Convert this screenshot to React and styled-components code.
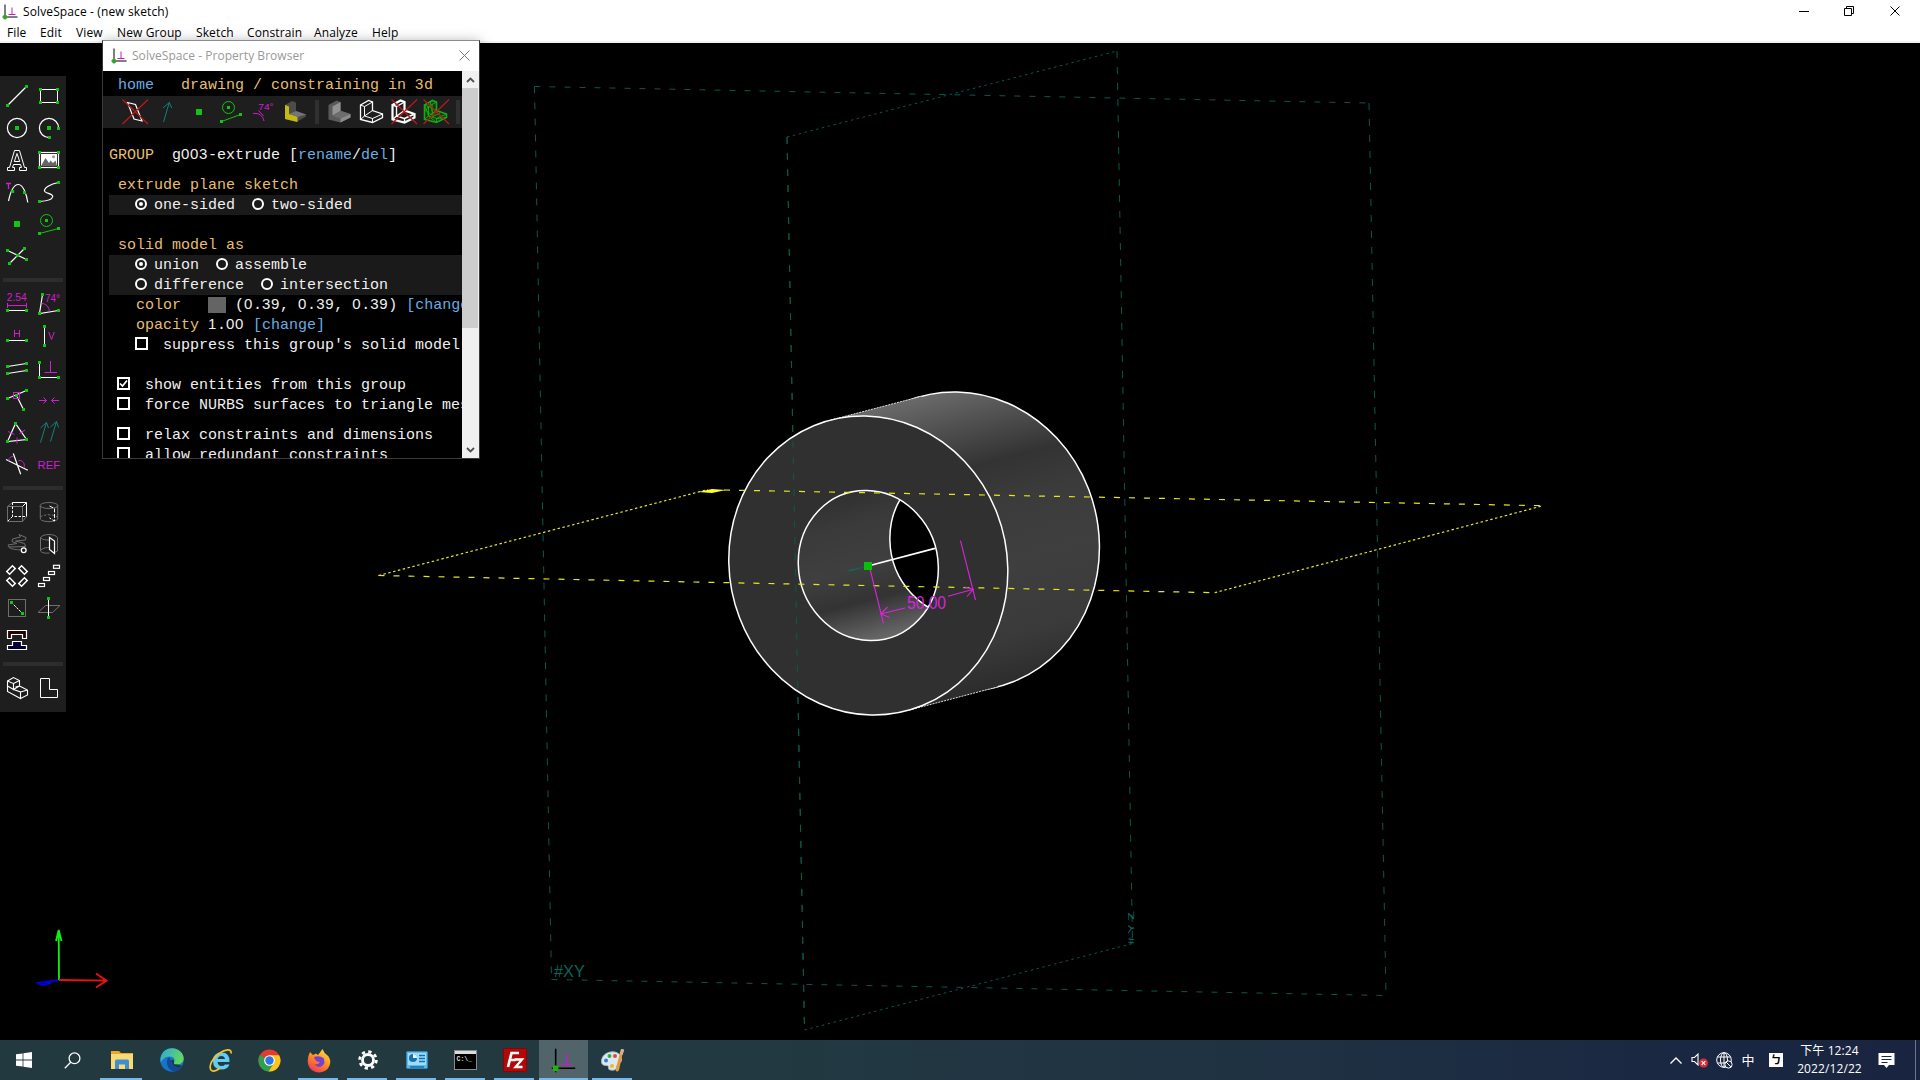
import React from "react";
import styled, { createGlobalStyle, css } from "styled-components";

const GREEN = "#12c412";
const MAGENTA = "#cf1fcf";
const TEAL = "#16807a";
const GRAY = "#6f6f6f";

const GlobalStyle = createGlobalStyle`
  * { box-sizing: border-box; }
  html, body { margin: 0; background: #000; overflow: hidden; }
`;

const Screen = styled.div`
  width: 1920px;
  height: 1080px;
  display: flex;
  flex-direction: column;
  position: relative;
  overflow: hidden;
  font-family: "Open Sans", "Noto Sans", "Noto Sans CJK TC", sans-serif;
  font-size: 12px;
  color: #000;
`;

/* ---------- main window chrome ---------- */
const TitleBar = styled.header`
  height: 23px;
  flex: none;
  display: flex;
  align-items: center;
  background: #fff;
  padding: 0 2px;
`;
const TitleText = styled.span`
  margin-left: 5px;
  flex: 1;
  line-height: 23px;
  letter-spacing: ${(p) => p.$spacing || "0"};
  color: ${(p) => p.$color || "#000"};
  white-space: pre;
`;
const Controls = styled.div`
  display: flex;
  height: 100%;
`;
const ControlButton = styled.button`
  width: ${(p) => p.$width || 46}px;
  height: 21px;
  padding: 0;
  border: 0;
  background: transparent;
  display: flex;
  align-items: center;
  justify-content: center;
`;
const MenuBar = styled.nav`
  height: 20px;
  flex: none;
  display: flex;
  background: #fff;
  border-bottom: 2px solid #f2f2f2;
  padding-left: 7px;
`;
const MenuItem = styled.span`
  width: ${(p) => p.$width}px;
  line-height: 20px;
  letter-spacing: 0.12px;
  white-space: nowrap;
`;

const Canvas = styled.main`
  height: 997px;
  flex: none;
  position: relative;
  background: #000;
`;
const SceneSvg = styled.svg`
  display: block;
`;

/* ---------- floating tool palette ---------- */
const Palette = styled.aside`
  position: absolute;
  left: 0;
  top: 33px;
  width: 66px;
  height: 636px;
  padding: 4px 1px;
  background: #1e1e1e;
`;
const PaletteGrid = styled.div`
  display: grid;
  grid-template-columns: 32px 32px;
  grid-auto-rows: 32px;
`;
const PaletteRule = styled.div`
  height: 4px;
  margin: 6px 2px;
  background: #2d2d2d;
`;
const Icon = styled.svg`
  display: block;
  width: 32px;
  height: 32px;
  flex: none;
  fill: none;
  stroke: #fff;
  stroke-width: 1;
`;

/* ---------- property browser ---------- */
const Browser = styled.section`
  position: absolute;
  left: 102px;
  top: 40px;
  width: 378px;
  height: 419px;
  border: 1px solid #3a3a3a;
  border-top-color: #8b8b8b;
  box-shadow: 0 2px 12px rgba(0, 0, 0, 0.35);
  background: #000;
  display: flex;
  flex-direction: column;
`;
const BrowserTitle = styled.div`
  height: 30px;
  flex: none;
  display: flex;
  align-items: center;
  background: #fff;
  padding: 0 0 1px 8px;
`;
const BrowserBody = styled.div`
  flex: 1;
  min-height: 0;
  display: flex;
`;
const Page = styled.div`
  flex: 1;
  min-width: 0;
  overflow: hidden;
  padding-top: 4px;
  font-family: "Liberation Mono", "DejaVu Sans Mono", monospace;
  font-size: 15px;
  color: #f0f0f0;
`;
const Row = styled.div`
  height: 20px;
  line-height: 22px;
  display: flex;
  white-space: pre;
  margin-left: 6px;
  padding-left: ${(p) => (p.$col || 0) * 9}px;
  margin-top: ${(p) => p.$gap || 0}px;
  ${(p) => p.$shaded && css`background: #1a1a1a;`}
`;
const tones = { amber: "#e6bd73", link: "#68ade0", plain: "#f0f0f0" };
const Run = styled.span`
  color: ${(p) => tones[p.$tone || "plain"]};
  flex: none;
`;
const Digit = styled.span`
  font-family: "Liberation Sans", sans-serif;
  letter-spacing: 0.66px;
  line-height: 0;
`;
const Strip = styled.div`
  display: flex;
  align-items: center;
  height: 32px;
  margin-top: 1px;
  padding-left: 16px;
  background: #1e1e1e;
`;
const StripRule = styled.div`
  width: 4px;
  height: 24px;
  flex: none;
  margin: 0 5px 0 4px;
  background: #303030;
`;
const Radio = styled.span`
  width: 12px;
  height: 12px;
  flex: none;
  margin: 3px 7px 0 ${(p) => (p.$first ? -1 : 17)}px;
  border: 2px solid #fff;
  border-radius: 50%;
  display: flex;
  align-items: center;
  justify-content: center;
  &::after {
    content: "";
    width: 4px;
    height: 4px;
    border-radius: 50%;
    background: ${(p) => (p.$on ? "#fff" : "transparent")};
  }
`;
const Check = styled.span`
  width: 13px;
  height: 13px;
  flex: none;
  margin: 2px 15px 0 -1px;
  border: 2px solid #fff;
  display: flex;
`;
const Swatch = styled.span`
  width: 18px;
  height: 16px;
  margin-top: 2px;
  flex: none;
  background: #646464;
`;
const ScrollTrack = styled.div`
  width: 17px;
  flex: none;
  background: #f0f0f0;
  display: flex;
  flex-direction: column;
`;
const ScrollArrow = styled.div`
  height: 17px;
  display: flex;
  align-items: center;
  justify-content: center;
`;
const ScrollThumb = styled.div`
  height: 240px;
  margin-right: 1px;
  background: #cdcdcd;
`;
const Spacer = styled.div`
  flex: 1;
`;

/* ---------- taskbar ---------- */
const Taskbar = styled.footer`
  height: 40px;
  flex: none;
  display: flex;
  background: linear-gradient(90deg, #22393f 0%, #223941 38%, #1f3242 65%, #1a2742 88%, #192540 100%);
`;
const Task = styled.div`
  width: ${(p) => p.$width || 49}px;
  height: 40px;
  display: flex;
  align-items: center;
  justify-content: center;
  background: ${(p) => (p.$active ? "#50646a" : "transparent")};
  position: relative;
  &::after {
    content: "";
    position: absolute;
    bottom: 0;
    left: ${(p) => (p.$active ? 0 : 4)}px;
    right: ${(p) => (p.$active ? 0 : 5)}px;
    height: 2px;
    background: ${(p) => (p.$open ? "#76b9ed" : "transparent")};
  }
`;
const Tray = styled.div`
  display: flex;
  align-items: center;
  color: #fff;
  width: 256px;
`;
const TrayCell = styled.div`
  width: ${(p) => p.$width}px;
  display: flex;
  justify-content: center;
  align-items: center;
`;
const Ime = styled.span`
  font-family: "Noto Sans CJK TC", sans-serif;
  font-size: 13px;
  line-height: 18px;
`;
const Bopomofo = styled.span`
  width: 14px;
  height: 14px;
  background: #fff;
  color: #000;
  font-family: "Noto Sans CJK TC", sans-serif;
  font-size: 11px;
  font-weight: 700;
  line-height: 13px;
  text-align: center;
`;
const Clock = styled.div`
  font-family: "Open Sans", "Noto Sans CJK TC", sans-serif;
  font-size: 12px;
  line-height: 18px;
  letter-spacing: 0.1px;
  text-align: center;
  white-space: nowrap;
`;
const Peek = styled.div`
  width: 5px;
  height: 40px;
  border-left: 1px solid #6b7488;
`;

/* ---------- drawing helpers ---------- */
const Dots = ({ at, r = 1.5 }) =>
  at.map(([x, y], i) => (
    <rect key={i} x={x - r} y={y - r} width={2 * r} height={2 * r} fill={GREEN} stroke="none" />
  ));

const Label = ({ x, y, size = 10, children, w }) => (
  <text
    x={x} y={y} fontSize={size} fill={MAGENTA} stroke="none"
    fontFamily="'Liberation Sans', sans-serif" textLength={w} lengthAdjust="spacingAndGlyphs"
  >
    {children}
  </text>
);

const Logo = ({ size = 16 }) => (
  <svg width={size} height={size} viewBox="0 0 16 16" fill="none">
    <path d="M3 0.5V15.5M0.5 13H15.5" stroke="#000" strokeWidth="1" />
    <path d="M10 3.5V10.5M6.5 10.5H13.5" stroke="#c020c0" strokeWidth="1" />
    <rect x="1.2" y="11.2" width="3.6" height="3.6" fill="#22b014" />
  </svg>
);

const sketchTools = [
  <><path d="M6.5 25.5L25.5 6.5" strokeWidth="1.3" /><Dots at={[[6.5, 25.5], [25.5, 6.5]]} /></>,
  <><path d="M7.5 9.5H24.5V22.5H7.5Z" /><Dots at={[[7.5, 9.5], [24.5, 9.5], [24.5, 22.5], [7.5, 22.5]]} /></>,
  <><circle cx="16" cy="16" r="9.6" strokeWidth="1.2" /><Dots at={[[16, 16]]} r={2} /></>,
  <><path d="M25.6 16A9.6 9.6 0 1 0 16 25.6" strokeWidth="1.2" /><Dots at={[[16, 16]]} r={2} /><Dots at={[[25.5, 16.5], [16.5, 25.5]]} /></>,
  <path d="M6.5 26.5V23.5H8.5L13.5 6.5H18.5L23.5 23.5H25.5V26.5H18.5V23.5H20.5L19.5 20.5H12.5L11.5 23.5H13.5V26.5ZM16 9.5L13.3 17.5H18.7Z" />,
  <>
    <rect x="6.5" y="8.5" width="19" height="15" strokeWidth="1.2" />
    <rect x="8" y="10" width="16" height="12" fill="#fff" stroke="none" />
    <path d="M8 22L12.5 14L16 19L17.5 16.5L20 19L22.5 16.5L24 22Z" fill="#666" stroke="none" />
    <circle cx="20.5" cy="12.7" r="1.5" fill="#999" stroke="none" />
    <Dots at={[[6.5, 8.5], [25.5, 8.5], [25.5, 23.5], [6.5, 23.5]]} />
  </>,
  <>
    <path d="M5 7.5H10M7.5 7.5V13" stroke={MAGENTA} strokeWidth="1.3" />
    <path d="M7.5 25C9 18 12 8.5 17.3 8.5C22 8.5 25.5 18 26.8 26.5" strokeWidth="1.2" />
    <Dots at={[[11.7, 15.5], [23.5, 16.5]]} />
  </>,
  <><path d="M25.5 6.5C17 8 11 12 11.5 15C12 17.5 20 17.5 19.7 20.5C19.4 23.5 14 25 6.5 25.5" strokeWidth="1.2" /><Dots at={[[25.5, 6.5], [6.5, 25.5]]} /></>,
  <Dots at={[[16, 16]]} r={3} />,
  <><g stroke={GREEN}><circle cx="13.5" cy="12.5" r="6" /><path d="M6.5 25.5L25.5 20.5" /></g><Dots at={[[13.5, 12.5], [6.5, 25.5], [25.5, 20.5]]} /></>,
  <><path d="M6.5 10.5L25.5 19.5M23.5 8.5L8.5 23.5" strokeWidth="1.2" /><Dots at={[[6.5, 10.5], [23.5, 8.5], [25.5, 19.5], [8.5, 23.5], [16.7, 15.3]]} /></>,
];

const constraintTools = [
  <><Label x={5.8} y={13} size={10} w={20}>2.54</Label><path d="M6.5 17.5H25.5M6.5 15V20M25.5 15V20" stroke={MAGENTA} /><path d="M6.5 22.5H25.5" /><Dots at={[[6.5, 22.5], [25.5, 22.5]]} /></>,
  <><path d="M9.5 6.5L6.5 25.5L25.5 22.5" strokeWidth="1.2" /><path d="M8.5 15.5C13 15.5 16.3 19 16.3 23.5" stroke={MAGENTA} /><Label x={12} y={13.6} size={10} w={15}>74°</Label><Dots at={[[9.5, 6.5], [6.5, 25.5], [25.5, 22.5]]} /></>,
  <><path d="M13.5 10V17M18.5 10V17M13.5 13.5H18.5" stroke={MAGENTA} /><path d="M6.5 20.5H25.5" /><Dots at={[[6.5, 20.5], [25.5, 20.5]]} /></>,
  <><path d="M11.5 6.5V25.5" /><path d="M15.7 12L18.5 19.5L21.3 12" stroke={MAGENTA} /><Dots at={[[11.5, 6.5], [11.5, 25.5]]} /></>,
  <><path d="M6.5 14.5L25.5 11.5M6.5 21.5L25.5 18.5" strokeWidth="1.2" /><Dots at={[[6.5, 14.5], [25.5, 11.5], [6.5, 21.5], [25.5, 18.5]]} /></>,
  <><path d="M6.5 10.5V25.5H25.5" /><path d="M17.5 9V20.5M11.5 20.5H24" stroke={MAGENTA} /><Dots at={[[6.5, 10.5], [6.5, 25.5], [25.5, 25.5]]} /></>,
  <><path d="M6.5 14.5L25.5 6.5M15.5 11.5L22.5 25.5" strokeWidth="1.2" /><rect x="12.5" y="8.5" width="6" height="6" stroke={MAGENTA} /><Dots at={[[6.5, 14.5], [25.5, 6.5], [22.5, 25.5], [15.5, 11.5]]} /></>,
  <path d="M6 16.5H13.5M10.5 13.5L13.5 16.5L10.5 19.5M26 16.5H18.5M21.5 13.5L18.5 16.5L21.5 19.5" stroke={MAGENTA} />,
  <><path d="M14.5 7.5L6.5 25.5L25.5 23.5Z" strokeWidth="1.2" /><path d="M7 15.5L13.5 18.5M24 14L18.5 17.5M16 21.5V27.5" stroke={MAGENTA} /><Dots at={[[14.5, 7.5], [6.5, 25.5], [25.5, 23.5]]} /></>,
  <path d="M7.5 26.5L13.5 6.5M7.5 12L13.5 6.5L15.5 12M17.5 25.5L23.5 5.5M17.5 11L23.5 5.5L25.5 11.5" stroke={TEAL} />,
  <><path d="M5 11.5L26.8 22.3M12.3 5.5L19.7 26.3" strokeWidth="1.2" /><path d="M7.5 12.5C8 9.5 10.5 8 13 8.5M17.5 12.5C22 12 24.5 16 22.8 20" stroke={MAGENTA} /></>,
  <Label x={4.6} y={20.7} size={11} w={22.5}>REF</Label>,
];

const groupTools = [
  <><path d="M6.5 10.5H21.5V25.5H6.5ZM6.5 10.5L11.5 6.5M21.5 25.5L25.5 20.5" stroke={GRAY} /><path d="M11.5 6.5H25.5V20.5M21.5 10.5L25.5 6.5" /><path d="M11.5 6.5V20.5H25.5M11.5 20.5L6.5 25.5" strokeDasharray="2.5 1.5" /></>,
  <><ellipse cx="16" cy="9.5" rx="8.8" ry="3" stroke={GRAY} /><path d="M7.3 9.5V23C9 26.5 23 26.5 24.7 23V9.5" stroke={GRAY} /><path d="M7.3 21C11 18 20 18 24.7 21" stroke={GRAY} strokeDasharray="2.5 1.5" /><path d="M16.5 10L21.5 12.5V25L16.5 22" strokeDasharray="4 1.5" /></>,
  <><path d="M18 6.5L25 9.5L24.5 12L14.5 13L23.5 15.5L24.5 18.5L8 19L7 17L16 15.5L11 13.5L11.5 11L19.5 9ZM8 19C8 21 15 21.5 19.5 22" stroke={GRAY} /><circle cx="22.7" cy="22.3" r="2.4" strokeWidth="1.3" /></>,
  <><path d="M7.5 9.5C10 5.5 22 5.5 24.5 9.5V23L21.5 24.5M7.5 9.5V23C9 25 12 25.5 16.5 25M7.5 9.5C9.5 12 13 12 16.5 12M7.5 22C11 19.5 14 19.5 16.5 19.5" stroke={GRAY} /><path d="M16.5 9.5L21.5 13V25.5L16.5 21.5Z" strokeWidth="1.2" /></>,
  <g strokeWidth="1.5">
    <rect x="6" y="8" width="8" height="4" transform="rotate(-45 10 10)" />
    <rect x="18" y="8" width="8" height="4" transform="rotate(45 22 10)" />
    <rect x="6" y="20" width="8" height="4" transform="rotate(45 10 22)" />
    <rect x="18" y="20" width="8" height="4" transform="rotate(-45 22 22)" />
  </g>,
  <g strokeWidth="1.2">
    <rect x="20.5" y="5.3" width="6" height="3" /><rect x="15.5" y="11.5" width="6" height="3" />
    <rect x="10.5" y="17.5" width="6" height="3" /><rect x="5.5" y="23.5" width="6" height="3" />
  </g>,
  <><rect x="7.5" y="7.5" width="17" height="17" stroke={GRAY} /><path d="M10.5 10.5L21.5 21.5" strokeDasharray="2.5 1" /><Dots at={[[10.5, 10.5], [21.5, 21.5]]} /></>,
  <><path d="M12.5 13.5H27L19.5 20.5H5Z" stroke={GRAY} /><path d="M15.5 6.5V25.5" /><Dots at={[[15.5, 6.5], [15.5, 25.5]]} /></>,
  <>
    <path d="M6.5 6.5H25.5V14.5H21.5V10.5H10.5V14.5H6.5Z" fill="#2a0000" strokeWidth="1.2" />
    <path d="M11.5 17.5H20.5V21.5H25.5V25.5H6.5V21.5H11.5Z" fill="#000036" strokeWidth="1.2" />
  </>,
];

const viewTools = [
  <path d="M6.5 9L12.5 5.5L18.5 8.5V14L12.5 17.5V11.5L6.5 9V19.5L19.5 26.5V20L12.5 17.5M12.5 11.5L18.5 8.5M18.5 14L26.5 18V23L19.5 26.5M19.5 20L26.5 18M6.5 14L12.5 17.5M18.5 14L14.5 15" strokeWidth="1.1" />,
  <path d="M7.5 6.5H16.5V17.5H24.5V25.5H7.5Z" />,
];

const RedX = () => <path d="M3.5 3.5L29 28M29 3.5L3.5 28" stroke="#c01818" strokeWidth="1.2" />;
const SEAT = "M4.5 9L12.5 4.5L16.5 6V14.5L26.5 18V21.5L16.5 26.5L4.5 23.5Z";
const SEAT_EDGES = "M4.5 9L8.5 10.5L16.5 6M8.5 10.5V20L16.5 22.5V26.5M16.5 22.5L26.5 18M8.5 20L16.5 14.5M4.5 23.5L8.5 20";

const visibilityTools = [
  <><path d="M8.5 6.5L16.5 8.5L23 25L15 23Z" strokeWidth="1.2" /><RedX /></>,
  <path d="M12.5 26L18.3 6.5M12 12L18.3 6.5L20.7 12" stroke={TEAL} />,
  <Dots at={[[16, 16]]} r={3} />,
  <><g stroke={GREEN}><circle cx="13.5" cy="11.5" r="6" /><path d="M6.5 25.5L25.5 18.5" /></g><Dots at={[[13.5, 11.5], [6.5, 25.5], [25.5, 18.5]]} /></>,
  <><Label x={11.2} y={14} size={9} w={15.5}>74°</Label><path d="M6 17.5C12 16.5 16 20 17 25M11.5 14.5L16.5 20" stroke={MAGENTA} /></>,
  <g stroke="none">
    <path d="M6 9L13 5L17 6.5V15L27 18.5V20.5L17.5 26L6 23Z" fill="#4c4c4c" />
    <path d="M6 9L10 10.5V18L18.5 20.5V26L6 23Z" fill="#c4ba12" />
    <path d="M10 18L17 15L27 18.5L18.5 21Z" fill="#757575" />
  </g>,
];

const shapeTools = [
  <g stroke="none">
    <path d={SEAT} fill="#5a5a5a" />
    <path d="M8.5 10.5L16.5 6V15L8.5 19.5Z" fill="#939393" />
    <path d="M8.5 20L16.5 15L26.5 18L16.5 22.5Z" fill="#6d6d6d" />
    <path d="M16.5 22.5L26.5 18V21.5L16.5 26.5Z" fill="#8c8c8c" />
  </g>,
  <><path d={SEAT} strokeWidth="1.3" /><path d={SEAT_EDGES} /></>,
  <><path d={SEAT} strokeWidth="2.2" /><path d={SEAT_EDGES} strokeWidth="1.4" /><RedX /></>,
  <><g stroke="#18a818"><path d={SEAT} fill="#0d400d" strokeWidth="1.6" /><path d={SEAT_EDGES} /><path d="M4.5 9L8.5 20M8.5 10.5L16.5 14.5M8.5 20L16.5 26.5M16.5 22.5L26.5 21.5M4.5 16L8.5 10.5M12 8L12.5 18M12 21L20 17M20 20.5L22 24M10 5.5L13 20L6 14" strokeWidth=".9" /></g><RedX /></>,
];

const IconCells = ({ icons }) =>
  icons.map((art, i) => (
    <Icon key={i} viewBox="0 0 32 32">{art}</Icon>
  ));

const T = ({ tone, children }) => (
  <Run $tone={tone}>
    {String(children).split(/([0-9]+)/).map((part, i) =>
      /^[0-9]+$/.test(part) ? <Digit key={i}>{part}</Digit> : part
    )}
  </Run>
);

const CheckBox = ({ on }) => (
  <Check>
    {on && <svg width="9" height="9" viewBox="0 0 9 9"><path d="M1 4.5L3.5 7L8 1.5" fill="none" stroke="#fff" strokeWidth="1.7" /></svg>}
  </Check>
);

/* ---------- 3D view ---------- */
const disc = (cx, cy, k) => `matrix(${139.5 * k} ${2.8 * k} ${2.85 * k} ${149.5 * k} ${cx} ${cy})`;
const FRONT = [868.3, 565.5];
const BACK = [959.9, 541.5];

const Disc = ({ c, k, fill = "none" }) => (
  <circle
    r="1" transform={disc(c[0], c[1], k)} fill={fill}
    stroke="#fff" strokeWidth="1.5" vectorEffect="non-scaling-stroke"
  />
);

const Scene = () => (
  <SceneSvg width="1920" height="997" viewBox="0 43 1920 997" fill="none">
    <defs>
      <linearGradient id="outer" gradientUnits="userSpaceOnUse" x1="830.2" y1="420.2" x2="906.4" y2="710.8">
        <stop offset="0" stopColor="#6a6a6a" />
        <stop offset=".1" stopColor="#555" />
        <stop offset=".27" stopColor="#333" />
        <stop offset=".4" stopColor="#3b3b3b" />
        <stop offset=".6" stopColor="#3f3f3f" />
        <stop offset=".85" stopColor="#3a3a3a" />
        <stop offset="1" stopColor="#2c2c2c" />
      </linearGradient>
      <linearGradient id="bore" gradientUnits="userSpaceOnUse" x1="849.2" y1="492.5" x2="887.4" y2="638.5">
        <stop offset="0" stopColor="#303030" />
        <stop offset=".2" stopColor="#3a3a3a" />
        <stop offset=".5" stopColor="#3f3f3f" />
        <stop offset=".72" stopColor="#333" />
        <stop offset="1" stopColor="#6a6a6a" />
      </linearGradient>
      <clipPath id="boreClip"><circle r="1" transform={disc(FRONT[0], FRONT[1], 0.502)} /></clipPath>
      <clipPath id="wallClip">
        <circle r="1" transform={disc(BACK[0], BACK[1], 1)} />
        <path d="M830.2 420.2L921.8 396.2L998 686.8L906.4 710.8Z" />
      </clipPath>
    </defs>

    <g stroke="#075a4e" strokeWidth="1">
      <path d="M534.5 86.5L1369 103M551.5 979.5L1386 995.5" strokeDasharray="6 9" />
      <path d="M534.5 86.5L551.5 979.5M1369 103L1386 995.5M787 137L804.5 1030M1117 51L1132.5 943.5" strokeDasharray="7 9" />
      <path d="M787 137L1117 51M804.5 1030L1132.5 943.5" strokeDasharray="2.5 3.5" />
    </g>
    <text x="554" y="977" fontSize="16" fill="#0b6459" fontFamily="'Liberation Sans', sans-serif" textLength="31" lengthAdjust="spacingAndGlyphs">#XY</text>
    <text transform="matrix(0 -1 .6 -.15 1133.5 944)" fontSize="14" fill="#0f7468" fontFamily="'Liberation Sans', sans-serif" textLength="33">#YZ</text>

    <rect x="820" y="380" width="290" height="345" fill="url(#outer)" clipPath="url(#wallClip)" />
    <Disc c={BACK} k={1} />
    <path d="M830.2 420.2L921.8 396.2L998 686.8L906.4 710.8Z" fill="url(#outer)" />
    <path d="M830.2 420.2L921.8 396.2M906.4 710.8L998 686.8" stroke="#ddd" strokeWidth="1" strokeDasharray="2 1" />
    <Disc c={FRONT} k={1} fill="#303030" />
    <g clipPath="url(#boreClip)">
      <rect x="790" y="485" width="160" height="165" fill="url(#bore)" />
      <Disc c={BACK} k={0.502} fill="#000" />
    </g>
    <Disc c={FRONT} k={0.502} />
    <path d="M787 137L804.5 1030" stroke="#075a4e" strokeDasharray="7 9" />

    <g stroke="#e6e620" strokeWidth="1.2">
      <path d="M378.500 575.5L1214.7 592.7M724 490L1543 505.7" strokeDasharray="6 9" />
      <path d="M378.500 575.5L708 489.5M1214.7 592.7L1543 505.7" strokeDasharray="2.5 2.5" />
    </g>
    <path d="M698 492L712 489L726 490L712 493Z" fill="#ffff20" />

    <path d="M868 566L935 548.3" stroke="#fff" strokeWidth="1.8" />
    <path d="M848 570L868 566L850 571.5Z" fill="#0a6a64" />
    <g stroke="#d924d9" strokeWidth="1.1">
      <path d="M869.5 567L883.5 623.5M960.5 540.7L975.5 600" />
      <path d="M880.7 614L905 608M887.5 607L880.7 614L889.5 617.5M948 596.3L973.3 589.3M964.5 587L973.3 589.3L967 596.5" />
    </g>
    <text x="907" y="608.5" fontSize="18" fill="#d924d9" fontFamily="'Liberation Sans', sans-serif" textLength="39" lengthAdjust="spacingAndGlyphs">50.00</text>
    <rect x="864" y="562" width="8" height="8" fill="#08c008" />

    <g strokeWidth="1.8">
      <path d="M59 980L38 983L42 985L51 983" stroke="#0000e0" />
      <path d="M59 980L58.7 930M56 941L58.7 930L61.5 941" stroke="#10f010" />
      <path d="M59 980L106.500 980.7M96 973.5L106.500 980.7L96 987.5" stroke="#f01010" />
    </g>
  </SceneSvg>
);

/* ---------- taskbar pictures ---------- */
const StartIcon = () => (
  <svg width="16" height="16" viewBox="0 0 16 16" fill="#fff">
    <path d="M0 2.3L6.6 1.4V7.6H0ZM7.4 1.3L16 0V7.6H7.4ZM0 8.4H6.6V14.6L0 13.7ZM7.4 8.4H16V16L7.4 14.7Z" />
  </svg>
);
const SearchIcon = () => (
  <svg width="17" height="17" viewBox="0 0 17 17" fill="none" stroke="#fff" strokeWidth="1.3">
    <circle cx="10.5" cy="6.3" r="5.4" /><path d="M6.7 10.3L.8 16.3" />
  </svg>
);
const ExplorerIcon = () => (
  <svg width="24" height="24" viewBox="0 0 24 24">
    <path d="M1 3h8l2 2h12v16H1z" fill="#e9a825" />
    <path d="M1 6h22v15H1z" fill="#fbd974" />
    <path d="M5 21v-8q0-1.500 1.500-1.500h11q1.500 0 1.500 1.500v8h-4v-4.500H9V21z" fill="#3f8fd0" />
  </svg>
);
const EdgeIcon = () => (
  <svg width="24" height="24" viewBox="0 0 24 24">
    <defs><linearGradient id="edgeA" x1="0" y1="0" x2="1" y2=".4"><stop offset="0" stopColor="#2aa6e0" /><stop offset="1" stopColor="#62d860" /></linearGradient></defs>
    <circle cx="12" cy="12" r="11.700" fill="#1874c8" />
    <path d="M.5 10C2 3 7 .3 12 .3C19 .3 23.700 5.500 23.700 10.500C23.700 14.500 20 16.500 17 16.500C14.500 16.500 13.500 15.500 14 14.500C15.500 12 14 8.500 9.500 8.500C5 8.500 1.500 12 .5 15Z" fill="url(#edgeA)" />
    <path d="M9 9C5.500 12 6 20 13 23.500C19 24 22 19.500 22.300 18C17 20.500 10.500 18 11 12.500Z" fill="#134a94" />
    <path d="M14 14.500C13 16 15 17 18 16.400L22.300 18C20 20 12 20 11.200 13C11.500 11 14.500 11.500 14 14.500Z" fill="#22393f" />
  </svg>
);
const IeIcon = () => (
  <svg width="24" height="24" viewBox="0 0 24 24" fill="none">
    <path d="M20.500 14H8.500Q9 18 12.500 18Q15 18 16 16.500H20.500Q18.500 21.500 12.500 21.500Q4 21.500 4 13Q4 4.500 12.500 4.500Q21 4.500 20.500 14ZM8.700 11H16Q15.500 8 12.500 8Q9.300 8 8.700 11Z" fill="#62ccf5" />
    <path d="M22 5.500C23 0 16 1.500 10 5.500C3 10.500-.5 18 2 22C4 24.500 9 21.500 11 20" stroke="#f2c12e" strokeWidth="1.700" />
  </svg>
);
const ChromeIcon = () => (
  <svg width="23" height="23" viewBox="0 0 24 24">
    <circle cx="12" cy="12" r="11.500" fill="#e03c31" />
    <path d="M2 6.300A11.500 11.500 0 0 0 11 23.500L16.700 14.500L12 12Z" fill="#2da14c" />
    <path d="M22 6.500H12L16.800 14.700L11 23.500A11.500 11.500 0 0 0 22 6.500Z" fill="#fbc61a" />
    <circle cx="12" cy="12" r="5.600" fill="#fff" /><circle cx="12" cy="12" r="4.400" fill="#2f74e0" />
  </svg>
);
const FirefoxIcon = () => (
  <svg width="24" height="25" viewBox="0 0 24 25">
    <defs><linearGradient id="ffA" x1=".8" y1="0" x2=".2" y2="1"><stop offset="0" stopColor="#ffe23a" /><stop offset=".5" stopColor="#ff8a20" /><stop offset="1" stopColor="#f0305c" /></linearGradient></defs>
    <path d="M3 4L6 7L9 5.500L11 7L15.500 1Q17 5 20 7Q23.500 10 23.300 14.500C22.500 21 17.500 24.500 12 24.500C5.500 24.500.7 19.500.7 13Q.7 8 3 4Z" fill="url(#ffA)" />
    <path d="M7 9Q12 7 16.500 10Q19 15 15 18Q10 20.500 7.500 16Q11 17 13 14Q8 14 7 9Z" fill="#7542cf" />
  </svg>
);
const GearIcon = () => (
  <svg width="22" height="22" viewBox="0 0 22 22" fill="none" stroke="#fff">
    <circle cx="11" cy="11" r="5.500" strokeWidth="2.800" />
    <circle cx="11" cy="11" r="8.300" strokeWidth="2.800" strokeDasharray="3.260 3.260" />
  </svg>
);
const PanelIcon = () => (
  <svg width="22" height="20" viewBox="0 0 22 20">
    <rect x=".5" y="1.500" width="21" height="17" rx="1" fill="#5cb9e8" stroke="#2f87bd" />
    <rect x="2" y="3" width="18" height="12" fill="#9cdcf8" />
    <circle cx="7" cy="8" r="4" fill="#1c6fae" /><path d="M7 8V4A4 4 0 0 1 11 8Z" fill="#e6f6ff" />
    <path d="M13 5.500h6M13 8.500h6M13 11.500h6M4 17h14" stroke="#1d6ea6" strokeWidth="1.500" />
  </svg>
);
const CmdIcon = () => (
  <svg width="23" height="20" viewBox="0 0 23 20">
    <rect x=".5" y=".5" width="22" height="19" fill="#000" stroke="#8a8a8a" />
    <rect x="1" y="1" width="21" height="3" fill="#dcdcdc" />
    <text x="2.500" y="11" fontSize="6.500" fontWeight="700" fontFamily="'Liberation Mono', monospace" fill="#ddd">C:\_</text>
  </svg>
);
const FileZillaIcon = () => (
  <svg width="24" height="24" viewBox="0 0 24 24" fill="none">
    <rect x=".5" y=".5" width="23" height="23" rx="1" fill="#b40808" stroke="#870505" />
    <path d="M5 19L8.500 5H16M6.500 12H12.500" stroke="#fff" strokeWidth="2.700" />
    <path d="M11.500 11.500H19L12.500 19H19.500" stroke="#fff" strokeWidth="2.300" />
  </svg>
);
const PaintIcon = () => (
  <svg width="25" height="25" viewBox="0 0 25 25">
    <path d="M11 4C17 3 22 7 21.500 12C21 16 17 15 17 18C17 22 13 23 9 21.500C8 19 9.500 18 7 17.500C4 17.500 1.500 17 1.500 13.500C1.500 8 6 4.500 11 4Z" fill="#dce9ee" stroke="#a7bbc4" />
    <circle cx="6" cy="12.500" r="2" fill="#3979cf" /><circle cx="9.500" cy="8" r="2" fill="#39a94a" />
    <circle cx="15" cy="8" r="2" fill="#e0483c" /><circle cx="12" cy="18" r="2" fill="#f1b62c" />
    <path d="M15.500 22L20 5L22.500 6L19 22Q17 25 15.500 22Z" fill="#e39a3b" /><path d="M19.500 6L21 1Q25 .5 24 3L22.500 7Z" fill="#d6b28c" />
  </svg>
);

export default function App() {
  return (
    <Screen>
      <GlobalStyle />
      <TitleBar>
        <Logo />
        <TitleText $spacing="0.12px">SolveSpace - (new sketch)</TitleText>
        <Controls>
          <ControlButton $width={45}><svg width="10" height="10"><path d="M0 5.500H10" stroke="#000" /></svg></ControlButton>
          <ControlButton><svg width="10" height="10" fill="none" stroke="#000"><path d="M.5 2.500H7.500V9.500H.5ZM2.500 2.500V.5H9.500V7.500H7.500" /></svg></ControlButton>
          <ControlButton><svg width="10" height="10" stroke="#000"><path d="M.5 .5L9.500 9.500M9.500 .5L.5 9.500" /></svg></ControlButton>
        </Controls>
      </TitleBar>
      <MenuBar>
        <MenuItem $width={33}>File</MenuItem>
        <MenuItem $width={36}>Edit</MenuItem>
        <MenuItem $width={41}>View</MenuItem>
        <MenuItem $width={79}>New Group</MenuItem>
        <MenuItem $width={51}>Sketch</MenuItem>
        <MenuItem $width={67}>Constrain</MenuItem>
        <MenuItem $width={58}>Analyze</MenuItem>
        <MenuItem $width={40}>Help</MenuItem>
      </MenuBar>

      <Canvas>
        <Scene />
        <Palette>
          <PaletteGrid><IconCells icons={sketchTools} /></PaletteGrid>
          <PaletteRule />
          <PaletteGrid><IconCells icons={constraintTools} /></PaletteGrid>
          <PaletteRule />
          <PaletteGrid><IconCells icons={groupTools} /></PaletteGrid>
          <PaletteRule />
          <PaletteGrid><IconCells icons={viewTools} /></PaletteGrid>
        </Palette>
      </Canvas>

      <Browser>
        <BrowserTitle>
          <Logo />
          <TitleText $color="#999" $spacing="0.04px">SolveSpace - Property Browser</TitleText>
          <ControlButton $width={30}><svg width="11" height="11" stroke="#777"><path d="M.5 .5L10.500 10.500M10.500 .5L.5 10.500" /></svg></ControlButton>
        </BrowserTitle>
        <BrowserBody>
          <Page>
            <Row $col={1}><T tone="link">home</T><T>{"   "}</T><T tone="amber">drawing / constraining in 3d</T></Row>
            <Strip>
              <IconCells icons={visibilityTools} />
              <StripRule />
              <IconCells icons={shapeTools} />
              <StripRule />
            </Strip>
            <Row $gap={17}><T tone="amber">GROUP</T><T>{"  g003-extrude ["}</T><T tone="link">rename</T><T>/</T><T tone="link">del</T><T>]</T></Row>
            <Row $gap={10} $col={1}><T tone="amber">extrude plane sketch</T></Row>
            <Row $shaded $col={3}><Radio $on $first /><T>one-sided</T><Radio /><T>two-sided</T></Row>
            <Row $gap={20} $col={1}><T tone="amber">solid model as</T></Row>
            <Row $shaded $col={3}><Radio $on $first /><T>union</T><Radio /><T>assemble</T></Row>
            <Row $shaded $col={3}><Radio $first /><T>difference</T><Radio /><T>intersection</T></Row>
            <Row $col={3}><T tone="amber">{"color   "}</T><Swatch /><T>{" (0.39, 0.39, 0.39) "}</T><T tone="link">[change]</T></Row>
            <Row $col={3}><T tone="amber">{"opacity "}</T><T>{"1.00 "}</T><T tone="link">[change]</T></Row>
            <Row $col={3}><CheckBox /><T>suppress this group's solid model</T></Row>
            <Row $gap={20} $col={1}><CheckBox on /><T>show entities from this group</T></Row>
            <Row $col={1}><CheckBox /><T>force NURBS surfaces to triangle mesh</T></Row>
            <Row $gap={10} $col={1}><CheckBox /><T>relax constraints and dimensions</T></Row>
            <Row $col={1}><CheckBox /><T>allow redundant constraints</T></Row>
          </Page>
          <ScrollTrack>
            <ScrollArrow><svg width="9" height="6" fill="none" stroke="#505050" strokeWidth="1.800"><path d="M1 5L4.500 1.500L8 5" /></svg></ScrollArrow>
            <ScrollThumb />
            <Spacer />
            <ScrollArrow><svg width="9" height="6" fill="none" stroke="#505050" strokeWidth="1.800"><path d="M1 1L4.500 4.500L8 1" /></svg></ScrollArrow>
          </ScrollTrack>
        </BrowserBody>
      </Browser>

      <Taskbar>
        <Task $width={48}><StartIcon /></Task>
        <Task $width={48}><SearchIcon /></Task>
        <Task $width={51} $open><ExplorerIcon /></Task>
        <Task><EdgeIcon /></Task>
        <Task><IeIcon /></Task>
        <Task><ChromeIcon /></Task>
        <Task $open><FirefoxIcon /></Task>
        <Task $open><GearIcon /></Task>
        <Task $open><PanelIcon /></Task>
        <Task $open><CmdIcon /></Task>
        <Task $open><FileZillaIcon /></Task>
        <Task $open $active><Logo size={25} /></Task>
        <Task $open><PaintIcon /></Task>
        <Spacer />
        <Tray>
          <TrayCell $width={24}><svg width="12" height="7" fill="none" stroke="#fff" strokeWidth="1.300"><path d="M.5 6.500L6 1L11.500 6.500" /></svg></TrayCell>
          <TrayCell $width={24}>
            <svg width="18" height="16" viewBox="0 0 18 16" fill="none">
              <path d="M1 5.500H3.500L7 2V13L3.500 9.500H1Z" stroke="#fff" strokeWidth="1.100" />
              <circle cx="12.500" cy="11" r="4.500" fill="#dc2c36" /><path d="M10.700 9.200L14.300 12.800M14.300 9.200L10.700 12.800" stroke="#fff" strokeWidth="1.200" />
            </svg>
          </TrayCell>
          <TrayCell $width={24}>
            <svg width="17" height="17" viewBox="0 0 17 17" fill="none" stroke="#fff">
              <circle cx="8" cy="8" r="7.300" /><ellipse cx="8" cy="8" rx="3.500" ry="7.300" /><path d="M1.500 5H14.500M1.500 11H9M8 .7V15" />
              <circle cx="12.500" cy="12.500" r="3.600" fill="#1a2742" /><path d="M10 10L15 15" />
            </svg>
          </TrayCell>
          <TrayCell $width={24}><Ime>中</Ime></TrayCell>
          <TrayCell $width={32}><Bopomofo>ㄅ</Bopomofo></TrayCell>
          <TrayCell $width={75}><Clock>下午 12:24<br />2022/12/22</Clock></TrayCell>
          <TrayCell $width={38}>
            <svg width="17" height="17" viewBox="0 0 17 17"><path d="M.5 1H16.500V13H11L8.500 16L6 13H.5Z" fill="#fff" /><path d="M3.500 4.500H13.500M3.500 7.500H13.500M3.500 10.500H9.500" stroke="#1a2742" /></svg>
          </TrayCell>
          <Spacer />
          <Peek />
        </Tray>
      </Taskbar>
    </Screen>
  );
}
